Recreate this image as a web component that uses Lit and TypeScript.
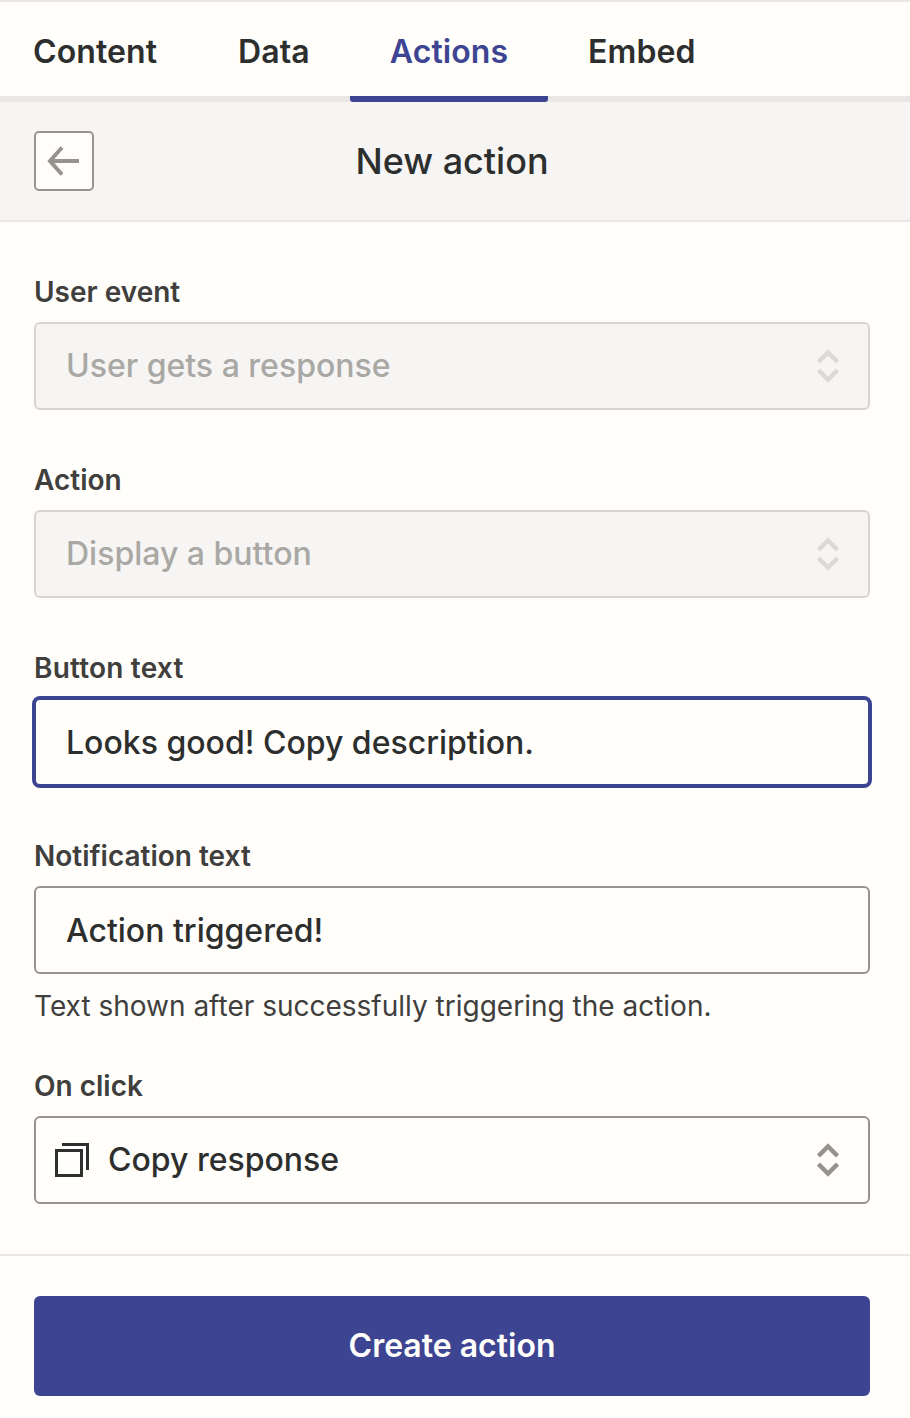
import { LitElement, html, css, svg } from "lit";
import { customElement } from "lit/decorators.js";

const chevrons = svg`<svg class="chev" viewBox="0 0 22 34" width="22" height="34" fill="none" stroke="currentColor" stroke-width="4.5"><path d="M1.5 13 L11 3.5 L20.5 13"/><path d="M1.5 21 L11 30.5 L20.5 21"/></svg>`;

@customElement("app-root")
export class AppRoot extends LitElement {
  static styles = css`
    :host { display: block; width: 910px; height: 1418px; background: #fffefb; font-family: Inter, "Noto Sans", sans-serif; color: #2d2e2e; overflow: hidden; }
    .tabs { display: flex; height: 94px; border-top: 2px solid #e9e8e5; }
    .tab { font-size: 32px; font-weight: 600; letter-spacing: 0.1px; line-height: 100px; height: 100px; box-sizing: border-box; text-align: center; position: relative; z-index: 1; }
    .t1 { margin-left: 33px; width: 124px; }
    .t2 { margin-left: 81px; width: 71px; }
    .t3 { margin-left: 41px; width: 198px; color: #3d4592; border-bottom: 6px solid #3d4592; border-radius: 0 0 3px 3px; }
    .t4 { margin-left: 40px; width: 107px; }
    .head { height: 118px; border-top: 6px solid #e9e8e5; border-bottom: 2px solid #e9e8e5; background: #f6f5f3; display: flex; align-items: center; padding-left: 34px; }
    .back { width: 60px; height: 60px; box-sizing: border-box; border: 2px solid #95948f; border-radius: 5px; background: #fffefb; display: flex; align-items: center; justify-content: center; color: #95948f; flex: none; }
    .title { flex: 1; text-align: center; padding-right: 100px; font-size: 36px; font-weight: 500; line-height: 116px; }
    .form { padding: 54px 40px 0 34px; display: flex; flex-direction: column; }
    .label { font-size: 28px; font-weight: 600; line-height: 32px; height: 32px; margin-bottom: 14px; color: #403f3e; }
    .wide { letter-spacing: 0.2px; }
    .field { height: 88px; width: 836px; box-sizing: border-box; border: 2px solid #95948f; border-radius: 6px; display: flex; align-items: center; padding-left: 30px; font-size: 32px; font-weight: 500; line-height: 84px; color: #2d2e2e; margin-bottom: 54px; position: relative; }
    .disabled { background: #f6f5f3; border-color: #d6d5d1; color: #a9a8a4; }
    .focus { border: 4px solid #3d4592; width: 840px; height: 92px; margin: -2px -2px 52px -2px; padding-left: 30px; border-radius: 8px; line-height: normal; }
    .nomb { margin-bottom: 0; line-height: normal; }
    .help { font-size: 28px; font-weight: 400; line-height: 40px; margin-top: 12px; margin-bottom: 44px; color: #403f3e; }
    .icon { padding-left: 19px; }
    .copy { margin-right: 19px; color: #2d2e2e; flex: none; }
    .chev { position: absolute; right: 29px; top: 25px; color: #95948f; }
    .disabled .chev { color: #dbdad6; }
    .foot { border-top: 2px solid #e9e8e5; margin-top: -4px; padding: 40px 40px 0 34px; }
    .btn { width: 836px; height: 100px; background: #3d4592; color: #fffefb; border-radius: 6px; font: 600 32px/100px Inter, sans-serif; text-align: center; }
  `;

  render() {
    return html`
      <div class="tabs">
        <div class="tab t1">Content</div>
        <div class="tab t2">Data</div>
        <div class="tab t3">Actions</div>
        <div class="tab t4">Embed</div>
      </div>
      <div class="head">
        <div class="back">
          <svg width="34" height="30" viewBox="0 0 34 30" fill="none" stroke="currentColor" stroke-width="4"><path d="M32 15 H3"/><path d="M15 1.5 L3 15 L15 28.5"/></svg>
        </div>
        <div class="title">New action</div>
      </div>
      <div class="form">
        <div class="label">User event</div>
        <div class="field disabled">User gets a response ${chevrons}</div>
        <div class="label">Action</div>
        <div class="field disabled">Display a button ${chevrons}</div>
        <div class="label wide">Button text</div>
        <div class="field focus">Looks good! Copy description.</div>
        <div class="label">Notification text</div>
        <div class="field nomb">Action triggered!</div>
        <div class="help">Text shown after successfully triggering the action.</div>
        <div class="label">On click</div>
        <div class="field icon">
          <svg class="copy" width="34" height="34" viewBox="0 0 34 34" fill="none" stroke="currentColor" stroke-width="3"><rect x="1.5" y="7.5" width="25" height="25"/><path d="M7 1.5 H32.5 V27"/></svg>
          Copy response ${chevrons}
        </div>
      </div>
      <div class="foot"><div class="btn">Create action</div></div>
    `;
  }
}
